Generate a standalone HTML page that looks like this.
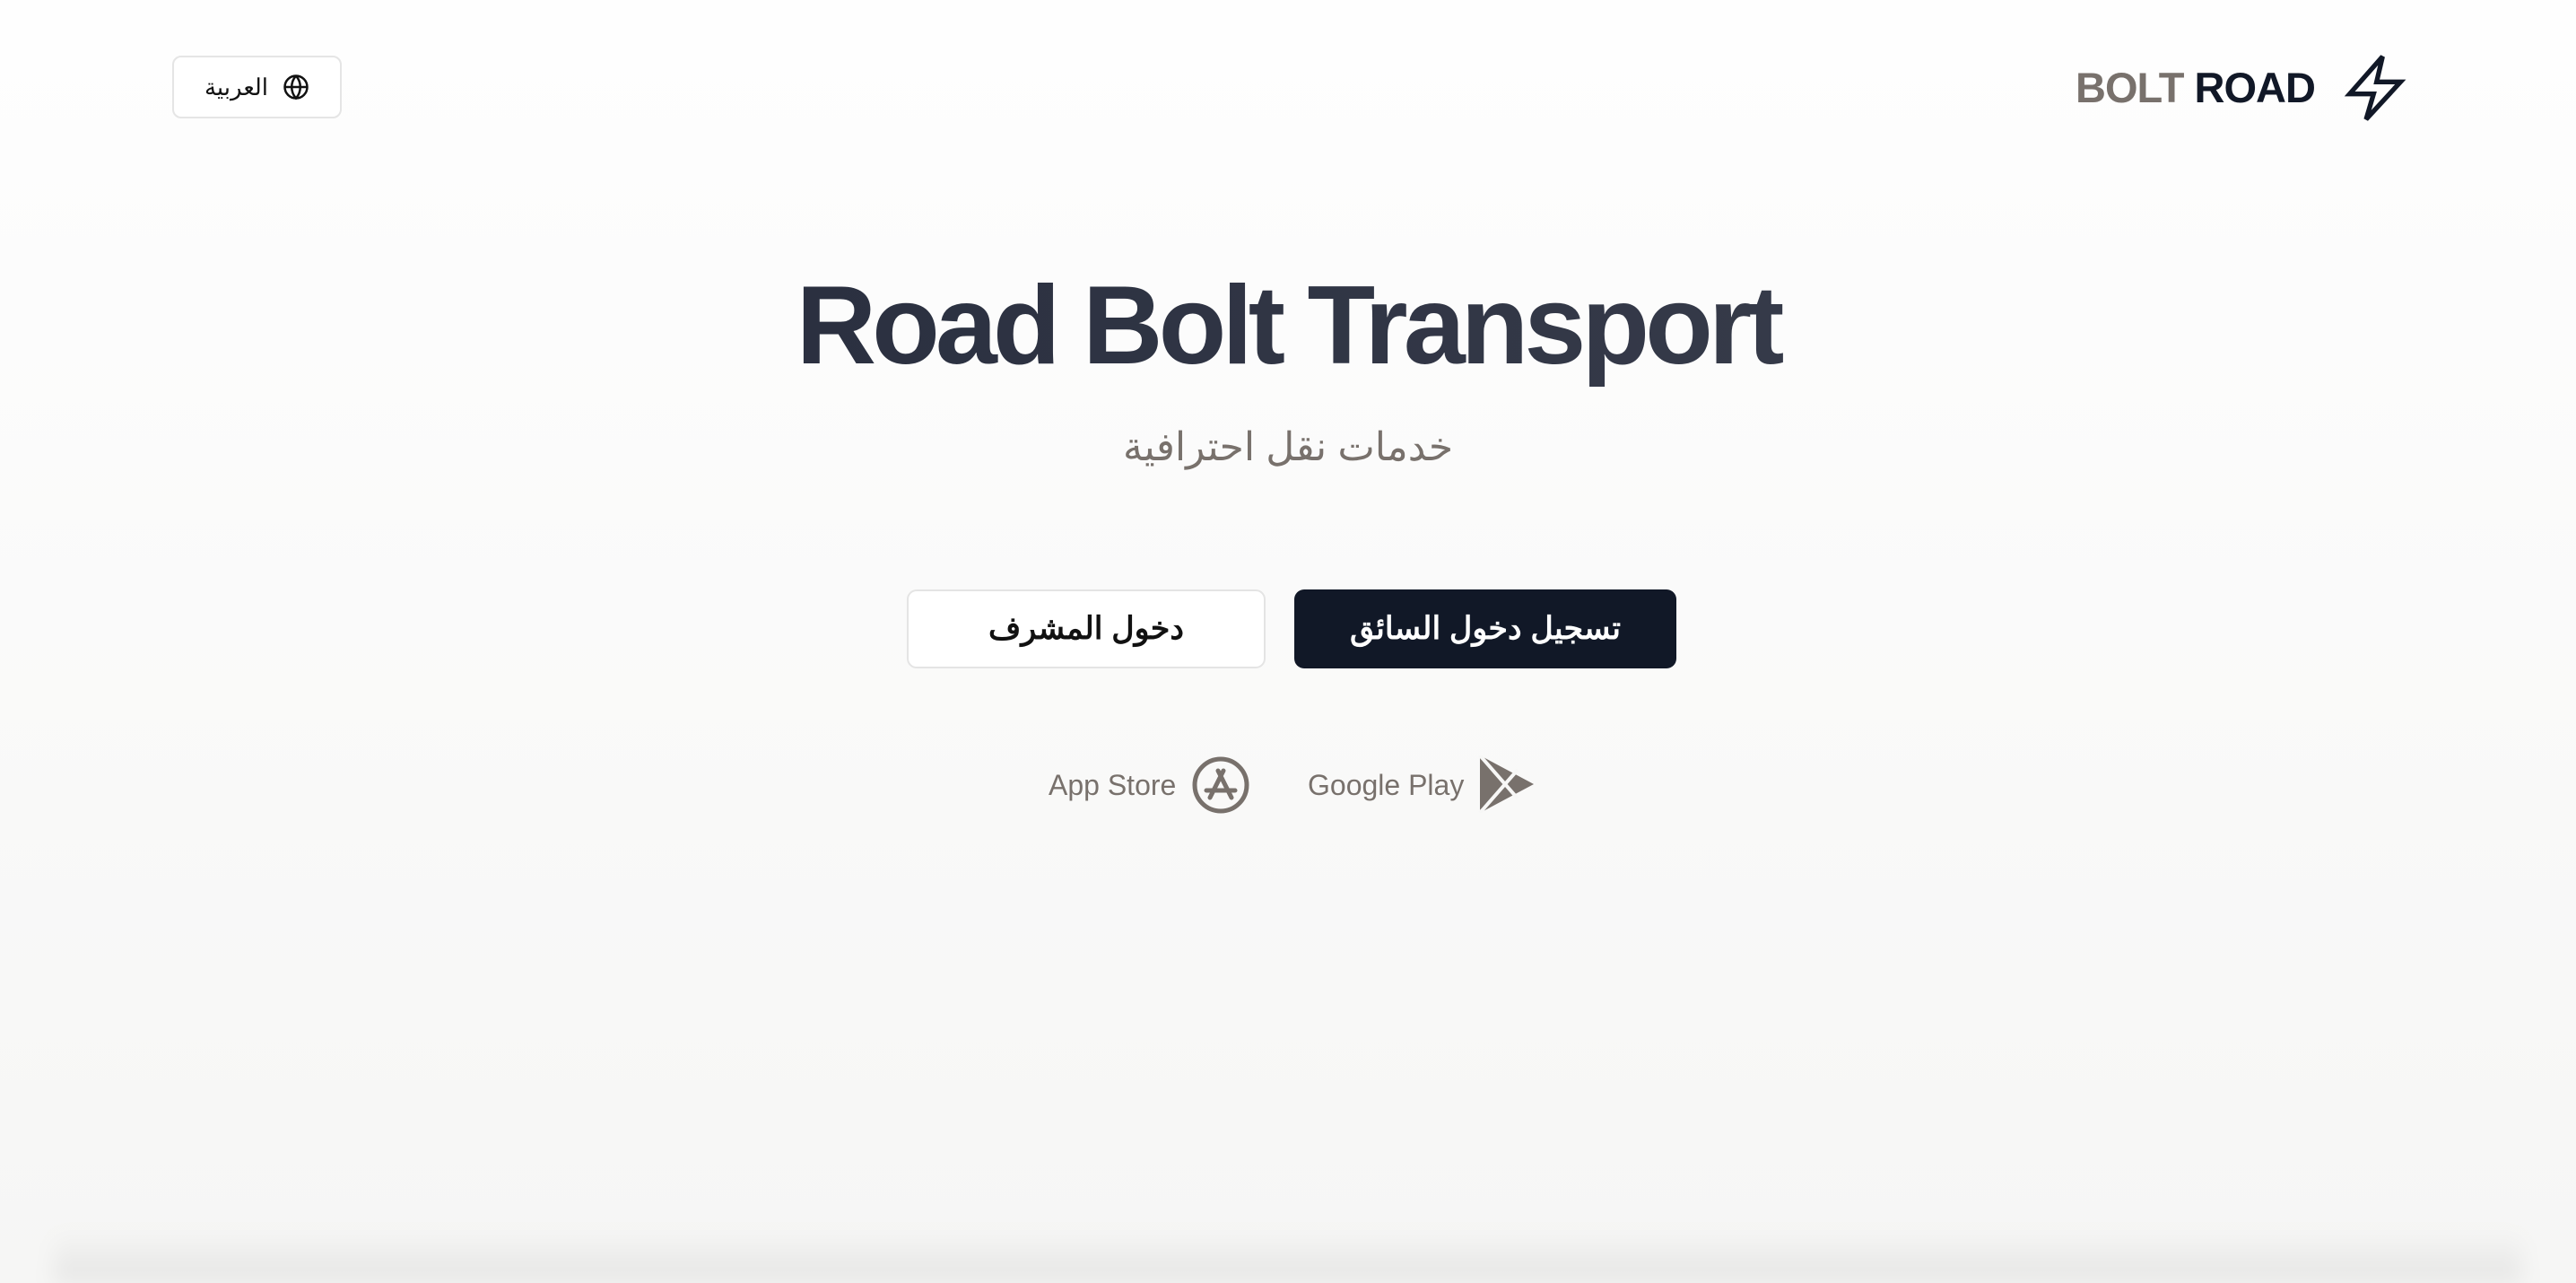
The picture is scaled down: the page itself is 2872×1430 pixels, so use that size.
<!DOCTYPE html>
<html><head><meta charset="utf-8"><style>
html,body{margin:0;padding:0;width:2872px;height:1430px;overflow:hidden;}
body{position:relative;background:linear-gradient(#fefefe,#f6f6f5);font-family:"Liberation Sans","Noto Sans CJK SC",sans-serif;}
.shadow{position:absolute;left:60px;right:60px;bottom:0;height:60px;background:linear-gradient(rgba(0,0,0,0),rgba(0,0,0,0.07));filter:blur(12px);}
.lang{position:absolute;left:192px;top:62px;width:189px;height:70px;border:2px solid #e5e5e5;border-radius:10px;background:#fff;box-sizing:border-box;display:flex;align-items:center;justify-content:center;gap:16px;font-size:26px;color:#111;}
.logo{position:absolute;left:2314px;top:70px;font-size:47px;font-weight:bold;letter-spacing:-1px;}
.bolt{position:absolute;left:2608px;top:56px;}
h1{position:absolute;left:0;right:0;top:292px;margin:0;text-align:center;font-size:124px;letter-spacing:-5px;font-weight:bold;color:#2b3040;background:linear-gradient(90deg,#222839,#3e4250);-webkit-background-clip:text;background-clip:text;-webkit-text-fill-color:transparent;}
.sub{position:absolute;left:0;right:0;top:473px;text-align:center;font-size:44px;color:#78716c;}
.btn{position:absolute;top:657px;height:88px;border-radius:11px;box-sizing:border-box;display:flex;align-items:center;justify-content:center;font-size:35px;font-weight:bold;}
.b1{left:1011px;width:400px;background:#fff;border:2px solid #e4e4e4;color:#111;}
.b2{left:1443px;width:426px;background:#111827;color:#fff;}
.store{position:absolute;top:857px;font-size:32px;color:#78716c;}
</style></head><body>
<div class="lang"><span>العربية</span>
<svg width="30" height="30" viewBox="0 0 24 24" fill="none" stroke="#111" stroke-width="2"><circle cx="12" cy="12" r="10"/><path d="M2 12h20M12 2a15 15 0 0 1 0 20a15 15 0 0 1 0-20"/></svg></div>
<div class="logo"><span style="color:#78716c">BOLT</span> <span style="color:#111827">ROAD</span></div>
<svg class="bolt" width="80" height="84" viewBox="0 0 24 24" fill="none" stroke="#111827" stroke-width="1.6" stroke-linejoin="miter"><path d="M14.5 1.5L3.5 14h8l-2.5 8.5L20.5 10h-8z"/></svg>
<h1>Road Bolt Transport</h1>
<div class="sub">خدمات نقل احترافية</div>
<div class="btn b1">دخول المشرف</div>
<div class="btn b2">تسجيل دخول السائق</div>
<div class="store" style="left:1169px">App Store</div>
<svg style="position:absolute;left:1328px;top:842px" width="66" height="66" viewBox="0 0 66 66" fill="none" stroke="#78716c" stroke-width="5" stroke-linecap="round"><circle cx="33" cy="33" r="29"/><path d="M30 17l15 30M36 17L21 47M17 39h32"/></svg>
<div class="store" style="left:1458px">Google Play</div>
<svg style="position:absolute;left:1648px;top:842px" width="62" height="64" viewBox="0 0 62 64"><path d="M2 0L62 32L2 64Z" fill="#78716c"/><path d="M2 0L44 48M2 64L44 16" stroke="#f7f7f6" stroke-width="4"/></svg>
<div class="shadow"></div>
</body></html>
